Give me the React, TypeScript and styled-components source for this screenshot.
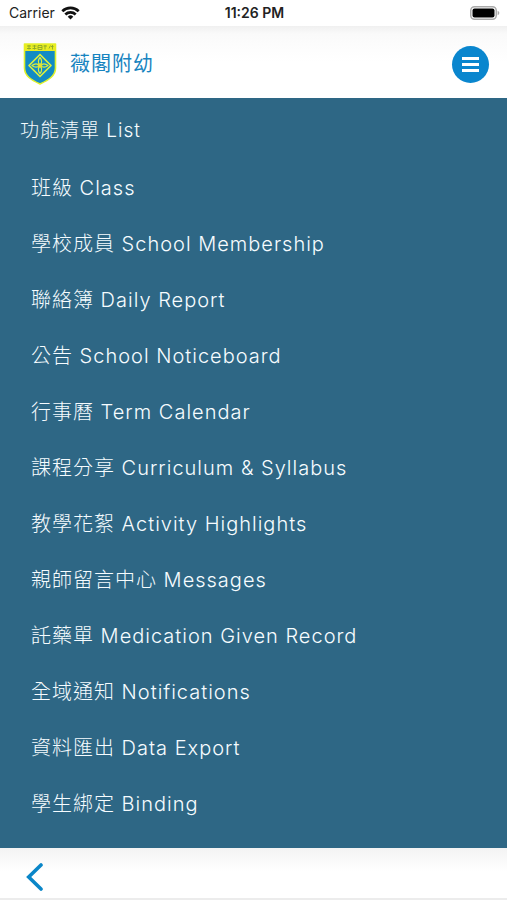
import React from "react";
import styled, { createGlobalStyle } from "styled-components";

const GlobalStyle = createGlobalStyle`
  * { box-sizing: border-box; }
  body {
    margin: 0;
    background: #fff;
    font-family: Inter, "Noto Sans CJK TC", sans-serif;
  }
  button { font: inherit; border: 0; padding: 0; cursor: pointer; }
`;

const Screen = styled.div`
  min-height: 100vh;
  display: flex;
  flex-direction: column;
`;

const StatusBar = styled.div`
  height: 26px;
  padding: 0 7px 0 9px;
  display: grid;
  grid-template-columns: 1fr auto 1fr;
  align-items: center;
  font-size: 14px;
  line-height: 26px;
  color: #222;
`;

const Carrier = styled.div`
  display: flex;
  align-items: center;
  gap: 6px;
`;

const Clock = styled.time`
  font-weight: 600;
`;

const Battery = styled.div`
  display: flex;
  justify-content: flex-end;
`;

const Header = styled.header`
  height: 72px;
  padding: 4px 18px 0 23px;
  display: flex;
  align-items: center;
  justify-content: space-between;
  background: linear-gradient(#f0f0f0, #fafafa 8px, #fff 36px);
`;

const Brand = styled.a`
  display: flex;
  align-items: center;
  gap: 13px;
  color: #1784c0;
  font-size: 20px;
  line-height: 28px;
  letter-spacing: 1px;
  text-decoration: none;
`;

const MenuButton = styled.button`
  width: 37px;
  height: 37px;
  border-radius: 50%;
  background: #0a86ce;
  display: flex;
  align-items: center;
  justify-content: center;
`;

const Menu = styled.nav`
  flex: 1;
  padding: 5px 20px 12px;
  background: #2e6785;
  color: #f6fcff;
`;

const MenuTitle = styled.h1`
  margin: 0;
  font-size: 19px;
  font-weight: 300;
  line-height: 56px;
  letter-spacing: 1px;
`;

const MenuList = styled.ul`
  margin: 0;
  padding: 1px 0 0 11px;
  list-style: none;
`;

const MenuLink = styled.a`
  display: block;
  color: inherit;
  font-size: 20px;
  font-weight: 300;
  line-height: 56px;
  letter-spacing: 1px;
  text-decoration: none;
`;

const Footer = styled.footer`
  height: 52px;
  padding: 7px 26px 0;
  display: flex;
  align-items: center;
  border-bottom: 2px solid #ececec;
  background: linear-gradient(#f3f3f3, #fff 24px);
`;

const BackButton = styled.button`
  display: flex;
  background: none;
`;

const items = [
  "班級 Class",
  "學校成員 School Membership",
  "聯絡簿 Daily Report",
  "公告 School Noticeboard",
  "行事曆 Term Calendar",
  "課程分享 Curriculum & Syllabus",
  "教學花絮 Activity Highlights",
  "親師留言中心 Messages",
  "託藥單 Medication Given Record",
  "全域通知 Notifications",
  "資料匯出 Data Export",
  "學生綁定 Binding",
];

const WifiIcon = () => (
  <svg width="19" height="14" viewBox="0 0 19 14" fill="none" stroke="#111" strokeWidth="2.7" aria-hidden="true">
    <path d="M1.3 5.2a11.8 11.8 0 0 1 16.4 0" />
    <path d="M4.3 8.5a7.5 7.5 0 0 1 10.4 0" />
    <path d="M9.5 13.6 6.7 10.7a4 4 0 0 1 5.6 0z" fill="#111" stroke="none" />
  </svg>
);

const BatteryIcon = () => (
  <svg width="30" height="14" viewBox="0 0 30 14" aria-hidden="true">
    <rect x="0.75" y="0.75" width="25.5" height="12.5" rx="3.8" fill="#fff" stroke="#aaa" strokeWidth="1.5" />
    <rect x="2.5" y="2.5" width="22" height="9" rx="2" fill="#000" />
    <path d="M27.6 4.8c2.3.8 2.3 3.6 0 4.4z" fill="#aaa" />
  </svg>
);

const Crest = () => (
  <svg width="34" height="42" viewBox="0 0 34 42" aria-hidden="true">
    <path d="M1.5 1h31v24c0 8-7 12-15.500 16C8.500 37 1.500 33 1.500 25z" fill="#128bc4" stroke="#dff12c" strokeWidth="1.6" strokeLinejoin="round" />
    <path d="M1 1h32v7H1z" fill="#e8ed22" />
    <g stroke="#8ba82a" strokeWidth="0.9" fill="none">
      <path d="M4 3h4M4 5.500h4M6 2v4.500M9.500 3h4M9.500 5.500h4M11.500 2v4.500M15 2.500h4v4h-4zM15 4.500h4M20.500 3h3.500M22 2v4.500M26 5.500l1.500-3M28 3.500h2.500M29.500 2v4.500" />
    </g>
    <g fill="none" stroke="#dcef3e" strokeLinejoin="round">
      <path d="M17 11.500 28 22.500 17 33.500 6 22.500z" strokeWidth="1.7" />
      <path d="M17 14.500c2.500 3 2.500 5 0 8-2.500-3-2.500-5 0-8zM17 30.500c2.500-3 2.500-5 0-8-2.500 3-2.500 5 0 8zM9 22.500c3-2.500 5-2.500 8 0-3 2.500-5 2.500-8 0zM25 22.500c-3-2.500-5-2.500-8 0 3 2.500 5 2.500 8 0z" strokeWidth="1.2" />
    </g>
    <circle cx="17" cy="22.5" r="2.2" fill="#e3df35" />
  </svg>
);

const BarsIcon = () => (
  <svg width="17" height="15" viewBox="0 0 17 15" fill="#fff" aria-hidden="true">
    <rect width="17" height="3" />
    <rect y="6" width="17" height="3" />
    <rect y="12" width="17" height="3" />
  </svg>
);

const BackIcon = () => (
  <svg width="17" height="28" viewBox="0 0 17 28" fill="none" stroke="#0a86c8" strokeWidth="3.6" aria-hidden="true">
    <path d="M15 2 2.7 14 15 26" strokeLinecap="round" />
  </svg>
);

export default function App() {
  return (
    <Screen>
      <GlobalStyle />
      <StatusBar>
        <Carrier>Carrier <WifiIcon /></Carrier>
        <Clock>11:26 PM</Clock>
        <Battery><BatteryIcon /></Battery>
      </StatusBar>
      <Header>
        <Brand href="#home"><Crest />薇閣附幼</Brand>
        <MenuButton type="button" aria-label="Menu"><BarsIcon /></MenuButton>
      </Header>
      <Menu>
        <MenuTitle>功能清單 List</MenuTitle>
        <MenuList>
          {items.map((item) => (
            <li key={item}><MenuLink href="#menu">{item}</MenuLink></li>
          ))}
        </MenuList>
      </Menu>
      <Footer>
        <BackButton type="button" aria-label="Back"><BackIcon /></BackButton>
      </Footer>
    </Screen>
  );
}
